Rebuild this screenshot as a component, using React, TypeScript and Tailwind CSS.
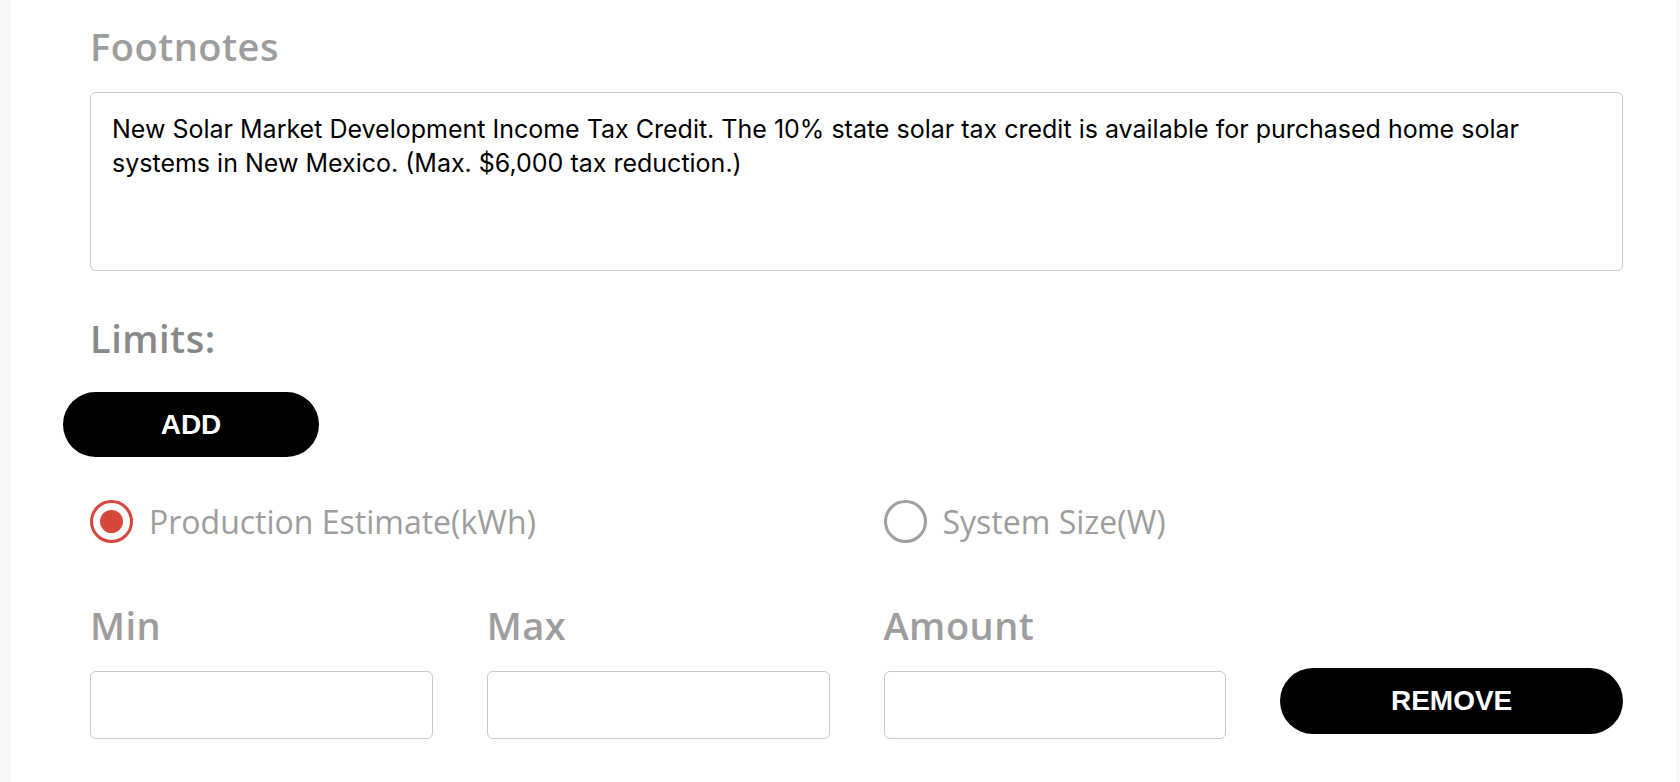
import React, { useState } from 'react';

const headingFont = { fontFamily: '"Open Sans", "Noto Sans", sans-serif' };

const RadioOption = ({
  label,
  checked,
  onSelect,
}: {
  label: string;
  checked: boolean;
  onSelect: () => void;
}) => (
  <button type="button" onClick={onSelect} className="flex items-center gap-[16px] text-left">
    <span
      className={`flex h-[43px] w-[43px] shrink-0 items-center justify-center rounded-full border-[3px] ${
        checked ? 'border-[#d6463a]' : 'border-[#a0a0a0]'
      }`}
    >
      {checked && <span className="h-[23px] w-[23px] rounded-full bg-[#d6463a]" />}
    </span>
    <span className="text-[32px] leading-none text-[#9d9d9d]" style={headingFont}>
      {label}
    </span>
  </button>
);

const FieldLabel = ({ children }: { children: React.ReactNode }) => (
  <h4 className="text-[38px] font-semibold leading-none tracking-[0.5px] text-[#9d9d9d]" style={headingFont}>
    {children}
  </h4>
);

const Input = () => (
  <input
    type="text"
    className="h-[68px] w-full rounded-[6px] border border-[#c9c9c9] bg-white px-4 text-[22px] outline-none"
  />
);

export default function App() {
  const [mode, setMode] = useState<'production' | 'size'>('production');

  return (
    <div className="flex min-h-screen bg-white">
      <div className="w-[11px] shrink-0 bg-[#f7f7f7]" />

      <div className="flex-1 pl-[79px] pr-[53px] pt-[27px] pb-10">
        <h3 className="text-[38px] font-semibold leading-none tracking-[0.5px] text-[#9d9d9d]" style={headingFont}>
          Footnotes
        </h3>

        <textarea
          readOnly
          className="mt-[27px] block h-[179px] w-full resize-none rounded-[6px] border border-[#c9c9c9] bg-white pl-[21px] pr-[21px] pt-[19px] text-[25px] leading-[34px] text-black outline-none"
          style={{ fontFamily: 'Inter, "Liberation Sans", Arial, sans-serif' }}
          defaultValue="New Solar Market Development Income Tax Credit. The 10% state solar tax credit is available for purchased home solar systems in New Mexico. (Max. $6,000 tax reduction.)"
        />

        <h3 className="mt-[48px] text-[38px] font-semibold leading-none tracking-[0.5px] text-[#888888]" style={headingFont}>
          Limits:
        </h3>

        <button
          type="button"
          className="-ml-[27px] mt-[35px] flex h-[65px] w-[256px] items-center justify-center rounded-full bg-black text-[28px] font-bold text-white"
          style={{ fontFamily: '"Liberation Sans", Arial, sans-serif' }}
        >
          ADD
        </button>

        <div className="mt-[43px] grid grid-cols-2 gap-x-[54px]">
          <RadioOption
            label="Production Estimate(kWh)"
            checked={mode === 'production'}
            onSelect={() => setMode('production')}
          />
          <RadioOption
            label="System Size(W)"
            checked={mode === 'size'}
            onSelect={() => setMode('size')}
          />
        </div>

        <div className="mt-[63px] grid grid-cols-4 gap-x-[54px] gap-y-[27px]">
          <FieldLabel>Min</FieldLabel>
          <FieldLabel>Max</FieldLabel>
          <FieldLabel>Amount</FieldLabel>
          <div />
          <Input />
          <Input />
          <Input />
          <button
            type="button"
            className="-mt-[3px] flex h-[66px] w-full items-center justify-center rounded-full bg-black text-[28px] font-bold text-white"
            style={{ fontFamily: '"Liberation Sans", Arial, sans-serif' }}
          >
            REMOVE
          </button>
        </div>
      </div>

      <div className="w-[4px] shrink-0 bg-[#f7f7f7]" />
    </div>
  );
}
